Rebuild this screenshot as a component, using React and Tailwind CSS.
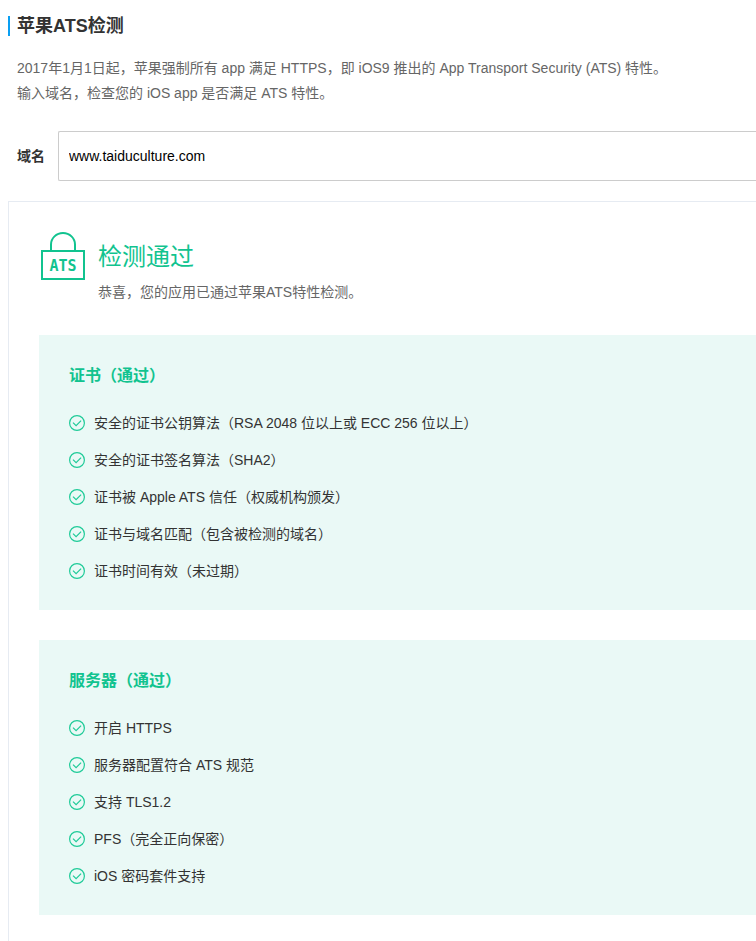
import { useState } from "react";

const sections = [
  {
    title: "证书（通过）",
    items: [
      "安全的证书公钥算法（RSA 2048 位以上或 ECC 256 位以上）",
      "安全的证书签名算法（SHA2）",
      "证书被 Apple ATS 信任（权威机构颁发）",
      "证书与域名匹配（包含被检测的域名）",
      "证书时间有效（未过期）",
    ],
  },
  {
    title: "服务器（通过）",
    items: [
      "开启 HTTPS",
      "服务器配置符合 ATS 规范",
      "支持 TLS1.2",
      "PFS（完全正向保密）",
      "iOS 密码套件支持",
    ],
  },
];

function LockIcon() {
  return (
    <svg width="44" height="48" viewBox="0 0 44 48" fill="none" className="shrink-0" aria-hidden="true">
      <rect x="1" y="19" width="42" height="28" stroke="#11c38f" strokeWidth="2" />
      <path d="M10 19V12.5a12 11.5 0 0 1 24 0V19" stroke="#11c38f" strokeWidth="2" />
      <text
        x="22"
        y="39"
        textAnchor="middle"
        fill="#11c38f"
        className="font-['DejaVu_Sans_Mono',monospace] text-[15px] font-bold"
      >
        ATS
      </text>
    </svg>
  );
}

function CheckIcon() {
  return (
    <svg width="16" height="16" viewBox="0 0 16 16" fill="none" stroke="#1fcb98" strokeWidth="1.2" className="shrink-0" aria-hidden="true">
      <circle cx="8" cy="8" r="7.4" />
      <path d="M4 7.6l3.1 3.1 5-5" />
    </svg>
  );
}

function Section({ title, items }) {
  return (
    <section className="bg-[#eaf9f6] px-[30px] pt-[31px] pb-[21px]">
      <h3 className="mb-[18px] text-base leading-5 font-bold text-[#11c38f]">{title}</h3>
      <ul>
        {items.map((item) => (
          <li key={item} className="flex h-[37px] items-center gap-[9px] text-sm text-[#333]">
            <CheckIcon />
            <span>{item}</span>
          </li>
        ))}
      </ul>
    </section>
  );
}

export default function App() {
  const [domain, setDomain] = useState("www.taiduculture.com");

  return (
    <main className="overflow-hidden bg-white pt-4 pl-2 font-['Liberation_Sans','Noto_Sans_CJK_SC',sans-serif] text-sm text-[#666]">
      <h1 className="border-l-2 border-[#0a9ff2] pl-[7px] text-lg leading-5 font-bold text-[#333]">
        苹果ATS检测
      </h1>

      <div className="mt-5 pl-[9px] leading-[25px]">
        <p>2017年1月1日起，苹果强制所有 app 满足 HTTPS，即 iOS9 推出的 App Transport Security (ATS) 特性。</p>
        <p>输入域名，检查您的 iOS app 是否满足 ATS 特性。</p>
      </div>

      <div className="mt-[25px] flex items-center gap-[13px] pl-[9px]">
        <label htmlFor="domain" className="shrink-0 font-bold text-[#333]">域名</label>
        <input
          id="domain"
          type="text"
          value={domain}
          onChange={(e) => setDomain(e.target.value)}
          className="h-[50px] min-w-0 flex-1 rounded-l-xs border border-r-0 border-[#ccc] px-[10px] text-sm text-black outline-none"
        />
      </div>

      {/* result */}
      <div className="mt-5 border-t border-l border-[#e6ebf2] pt-[30px] pb-[26px] pl-[30px]">
        <div className="flex items-start gap-[13px] pl-[2px]">
          <LockIcon />
          <div className="pt-[9px]">
            <h2 className="text-2xl leading-8 font-normal text-[#11c38f]">检测通过</h2>
            <p className="mt-[9px] leading-5">恭喜，您的应用已通过苹果ATS特性检测。</p>
          </div>
        </div>

        <div className="mt-[33px] space-y-[30px]">
          {sections.map((s) => (
            <Section key={s.title} title={s.title} items={s.items} />
          ))}
        </div>
      </div>
    </main>
  );
}
